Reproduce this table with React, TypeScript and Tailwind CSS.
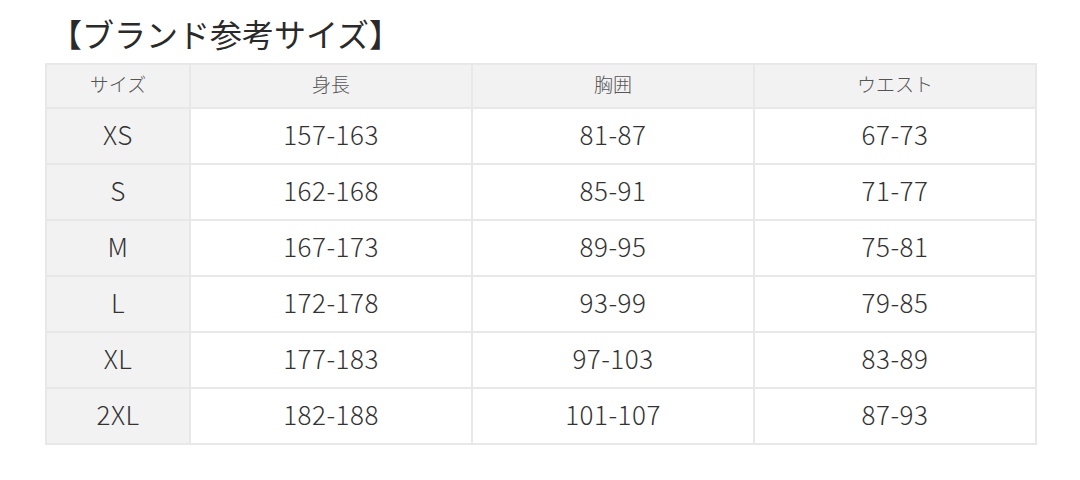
const rows = [
  ["XS", "157-163", "81-87", "67-73"],
  ["S", "162-168", "85-91", "71-77"],
  ["M", "167-173", "89-95", "75-81"],
  ["L", "172-178", "93-99", "79-85"],
  ["XL", "177-183", "97-103", "83-89"],
  ["2XL", "182-188", "101-107", "87-93"],
];

const headers = ["サイズ", "身長", "胸囲", "ウエスト"];

export default function App() {
  return (
    <div
      className="w-[1080px] h-[480px] bg-white text-[#333]"
      style={{ fontFamily: '"Noto Sans CJK JP", "Noto Sans", sans-serif' }}
    >
      <div className="pl-[50px] pt-[10px] h-[63px]">
        <h1 className="text-[32px] leading-[46px] font-normal text-[#2a2a2a]">【ブランド参考サイズ】</h1>
      </div>
      <div className="pl-[45px]">
        <table className="w-[990px] border-collapse border-2 border-[#e8e8e8] table-fixed">
          <colgroup>
            <col className="w-[144px]" />
            <col className="w-[282px]" />
            <col className="w-[282px]" />
            <col className="w-[282px]" />
          </colgroup>
          <thead>
            <tr className="h-[44px] bg-[#f2f2f2]">
              {headers.map((h) => (
                <th key={h} className="border-2 border-[#e8e8e8] text-[19px] font-light text-[#555] p-0 pb-[3px]">
                  {h}
                </th>
              ))}
            </tr>
          </thead>
          <tbody>
            {rows.map((r) => (
              <tr key={r[0]} className="h-[56px]">
                {r.map((c, i) => (
                  <td
                    key={i}
                    className={
                      i === 0
                        ? "border-2 border-[#e8e8e8] bg-[#f2f2f2] text-center text-[26px] tracking-[0.5px] font-light p-0 pb-[5px]"
                        : "border-2 border-[#e8e8e8] text-center text-[26px] tracking-[0.5px] font-light p-0 pb-[5px]"
                    }
                  >
                    {c}
                  </td>
                ))}
              </tr>
            ))}
          </tbody>
        </table>
      </div>
    </div>
  );
}
